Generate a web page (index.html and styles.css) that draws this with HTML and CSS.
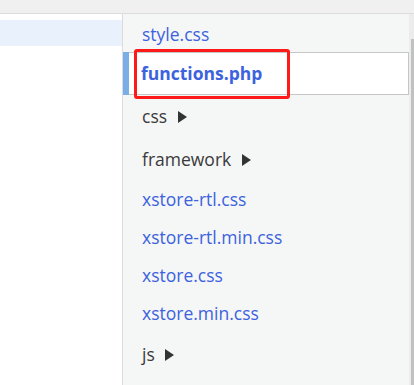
FILE: index.html
```html
<!DOCTYPE html>
<html>
  <head>
    <title>Theme files</title>
    <link rel="stylesheet" href="styles.css">
  </head>
  <body>
    <div class="topbar"></div>

    <div class="main">
      <div class="sidebar">
        <div class="side-row active"></div>
      </div>

      <div class="files">
        <ul class="file-list">
          <li class="item file first"><a href="#">style.css</a></li>
          <li class="item file current">
            <a href="#">functions.php</a>
            <span class="highlight"></span>
          </li>
          <li class="item folder">css <span class="arrow"></span></li>
          <li class="item folder">framework <span class="arrow"></span></li>
          <li class="item file"><a href="#">xstore-rtl.css</a></li>
          <li class="item file"><a href="#">xstore-rtl.min.css</a></li>
          <li class="item file"><a href="#">xstore.css</a></li>
          <li class="item file"><a href="#">xstore.min.css</a></li>
          <li class="item folder">js <span class="arrow"></span></li>
        </ul>
        <div class="scrollbar">
          <div class="thumb"></div>
        </div>
      </div>
    </div>
  </body>
</html>
```

FILE: styles.css
```css
body {
  margin: 0;
  padding: 0;
  font-family: "Open Sans", "Noto Sans", sans-serif;
  font-size: 17.5px;
  background-color: #fff;
  height: 385px;
  overflow: hidden;
}

.topbar {
  height: 13px;
  background-color: #f0f0f0;
  border-bottom: 1px solid #dcdcdc;
}

.main {
  display: flex;
  height: 371px;
}

.sidebar {
  width: 122px;
  border-right: 1px solid #dcdcdc;
  padding-top: 6px;
  background-color: #fff;
}

.side-row {
  height: 26px;
}

.side-row.active {
  background-color: #e8f1fc;
}

.files {
  flex: 1;
  display: flex;
  background-color: #f5f6f6;
}

.file-list {
  flex: 1;
  list-style: none;
  margin: 0;
  padding: 0;
}

.item {
  position: relative;
  padding-left: 19px;
  height: 38px;
  line-height: 36px;
  color: #3a3a3a;
  white-space: nowrap;
}

.item.first {
  line-height: 40px;
}

.item.folder {
  height: 43px;
  line-height: 43px;
}

.item a {
  color: #3c62de;
  text-decoration: none;
}

.item.current {
  height: 41px;
  line-height: 41px;
  margin-left: 6px;
  padding-left: 12px;
  background-color: #fff;
  border: 1px solid #c6c6c6;
  border-left: none;
  box-shadow: -6px 0 0 #7aaee6;
}

.item.current a {
  font-weight: 700;
}

.highlight {
  position: absolute;
  left: 5px;
  top: -4px;
  width: 150px;
  height: 44px;
  border: 3px solid #ff1a1a;
  border-radius: 3px;
}

.arrow {
  display: inline-block;
  margin-left: 6px;
  width: 0;
  height: 0;
  border-top: 6px solid transparent;
  border-bottom: 6px solid transparent;
  border-left: 9px solid #333;
  vertical-align: 0;
}

.scrollbar {
  width: 5px;
  background-color: #ececec;
  display: flex;
  flex-direction: column;
  align-items: flex-end;
}

.thumb {
  margin-top: 25px;
  width: 3px;
  flex: 1;
  background-color: #c1c1c1;
}
```
